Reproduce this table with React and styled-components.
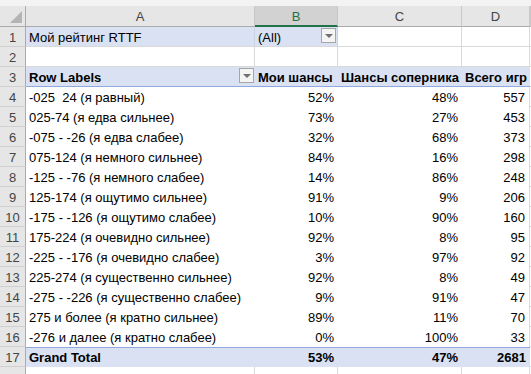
import React from "react";
import styled, { createGlobalStyle, css } from "styled-components";

const GlobalStyle = createGlobalStyle`
  html, body { margin: 0; padding: 0; background: #ffffff; }
  body { font-family: "Liberation Sans", Arial, sans-serif; overflow: hidden; }
`;

const COLS = "26px 229px 83px 124px 68px 1fr";
const PIVOT = "#d9e1f2";
const PIVOT_LINE = "#8ea9db";
const GRID = "#d9d9d9";

const Sheet = styled.div`
  width: 531px;
  height: 374px;
  overflow: hidden;
  background: #ffffff;
  font-size: 13px;
  color: #000;
`;

const TopStrip = styled.div`
  height: 6px;
  background: #f3f3f3;
`;

const HeaderRow = styled.div`
  display: grid;
  grid-template-columns: ${COLS};
  height: 21px;
`;

const ColHead = styled.div`
  box-sizing: border-box;
  display: flex;
  align-items: center;
  justify-content: center;
  background: ${(p) => (p.$active ? "#d2d2d2" : "#e6e6e6")};
  color: ${(p) => (p.$active ? "#217346" : "#444444")};
  border-right: 1px solid #c8c8c8;
  border-bottom: ${(p) => (p.$active ? "2px solid #217346" : "1px solid #ababab")};
  font-size: 13px;
  padding-top: ${(p) => (p.$active ? "1px" : "0")};
`;

const Corner = styled.div`
  box-sizing: border-box;
  position: relative;
  background: #e6e6e6;
  border-right: 1px solid #ababab;
  border-bottom: 1px solid #ababab;
  &::after {
    content: "";
    position: absolute;
    right: 3px;
    bottom: 3px;
    width: 0;
    height: 0;
    border-left: 12px solid transparent;
    border-bottom: 12px solid #b4b4b4;
  }
`;

const Row = styled.div`
  display: grid;
  grid-template-columns: ${COLS};
  height: 20px;
`;

const RowHead = styled.div`
  box-sizing: border-box;
  display: flex;
  align-items: center;
  justify-content: center;
  background: #e6e6e6;
  color: #444444;
  border-right: 1px solid #ababab;
  border-bottom: 1px solid #d0d0d0;
  font-size: 13px;
  padding-top: 1px;
`;

const kinds = {
  blank: css`
    background: #ffffff;
    border-right: 1px solid ${GRID};
    border-bottom: 1px solid ${GRID};
  `,
  field: css`
    background: ${PIVOT};
    border-right: 1px solid #c9d3e6;
    border-bottom: 1px solid ${GRID};
  `,
  head: css`
    background: ${PIVOT};
    font-weight: bold;
    border-bottom: 1px solid ${PIVOT_LINE};
  `,
  data: css`
    background: #ffffff;
  `,
  total: css`
    background: ${PIVOT};
    font-weight: bold;
    box-shadow: inset 0 1px 0 ${PIVOT_LINE};
  `,
};

const Cell = styled.div`
  box-sizing: border-box;
  position: relative;
  display: flex;
  align-items: center;
  justify-content: ${(p) => (p.$right ? "flex-end" : "flex-start")};
  padding: 1px 4px 0 3px;
  white-space: pre;
  overflow: visible;
  ${(p) => kinds[p.$kind || "blank"]};
  ${(p) => p.$edge && css`border-right: 1px solid ${GRID};`}
`;

const DropButton = styled.div`
  position: absolute;
  right: 1px;
  top: 1px;
  width: 15px;
  height: 15px;
  box-sizing: border-box;
  background: #f4f4f4;
  border: 1px solid #a6a6a6;
  display: flex;
  align-items: center;
  justify-content: center;
  &::after {
    content: "";
    width: 0;
    height: 0;
    border-left: 4px solid transparent;
    border-right: 4px solid transparent;
    border-top: 4px solid #707070;
  }
`;

const rows = [
  ["-025  24 (я равный)", "52%", "48%", "557"],
  ["025-74 (я едва сильнее)", "73%", "27%", "453"],
  ["-075 - -26 (я едва слабее)", "32%", "68%", "373"],
  ["075-124 (я немного сильнее)", "84%", "16%", "298"],
  ["-125 - -76 (я немного слабее)", "14%", "86%", "248"],
  ["125-174 (я ощутимо сильнее)", "91%", "9%", "206"],
  ["-175 - -126 (я ощутимо слабее)", "10%", "90%", "160"],
  ["175-224 (я очевидно сильнее)", "92%", "8%", "95"],
  ["-225 - -176 (я очевидно слабее)", "3%", "97%", "92"],
  ["225-274 (я существенно сильнее)", "92%", "8%", "49"],
  ["-275 - -226 (я существенно слабее)", "9%", "91%", "47"],
  ["275 и более (я кратно сильнее)", "89%", "11%", "70"],
  ["-276 и далее (я кратно слабее)", "0%", "100%", "33"],
];

export default function App() {
  return (
    <>
      <GlobalStyle />
      <Sheet>
        <TopStrip />
        <HeaderRow>
          <Corner />
          <ColHead>A</ColHead>
          <ColHead $active>B</ColHead>
          <ColHead>C</ColHead>
          <ColHead>D</ColHead>
          <ColHead />
        </HeaderRow>

        <Row>
          <RowHead>1</RowHead>
          <Cell $kind="field">Мой рейтинг RTTF</Cell>
          <Cell $kind="field">
            (All)
            <DropButton />
          </Cell>
          <Cell />
          <Cell />
          <Cell />
        </Row>

        <Row>
          <RowHead>2</RowHead>
          <Cell />
          <Cell />
          <Cell />
          <Cell />
          <Cell />
        </Row>

        <Row>
          <RowHead>3</RowHead>
          <Cell $kind="head">
            Row Labels
            <DropButton />
          </Cell>
          <Cell $kind="head">Мои шансы</Cell>
          <Cell $kind="head">Шансы соперника</Cell>
          <Cell $kind="head">Всего игр</Cell>
          <Cell />
        </Row>

        {rows.map((r, i) => (
          <Row key={r[0]}>
            <RowHead>{i + 4}</RowHead>
            <Cell $kind="data">{r[0]}</Cell>
            <Cell $kind="data" $right>{r[1]}</Cell>
            <Cell $kind="data" $right>{r[2]}</Cell>
            <Cell $kind="data" $right $edge>{r[3]}</Cell>
            <Cell />
          </Row>
        ))}

        <Row>
          <RowHead>17</RowHead>
          <Cell $kind="total">Grand Total</Cell>
          <Cell $kind="total" $right>53%</Cell>
          <Cell $kind="total" $right>47%</Cell>
          <Cell $kind="total" $right>2681</Cell>
          <Cell />
        </Row>

        <Row>
          <RowHead />
          <Cell />
          <Cell />
          <Cell />
          <Cell />
          <Cell />
        </Row>
      </Sheet>
    </>
  );
}
